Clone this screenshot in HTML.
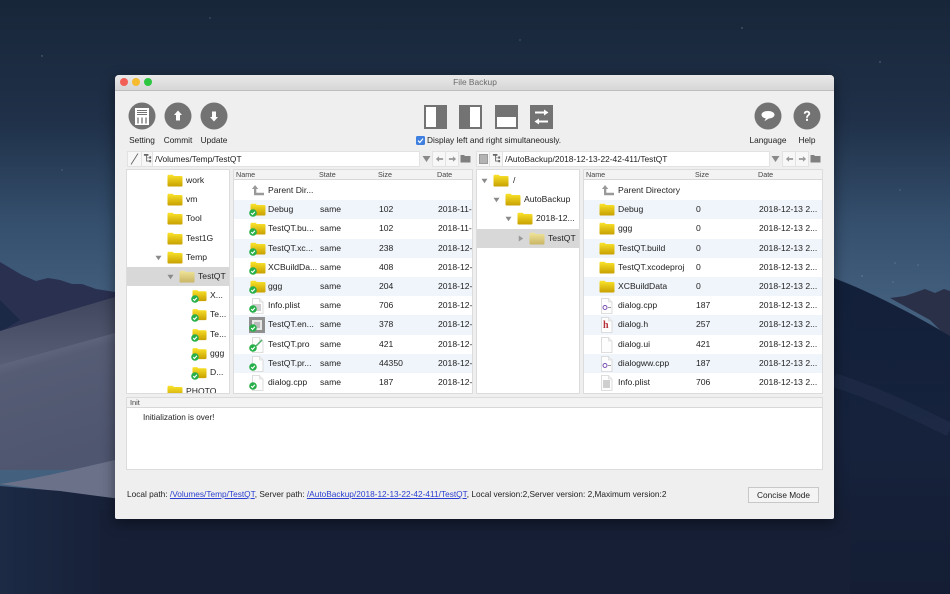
<!DOCTYPE html>
<html><head><meta charset="utf-8"><title>File Backup</title>
<style>
html,body{margin:0;padding:0;width:950px;height:594px;overflow:hidden;background:#16203a}
body{position:relative;font-family:"Liberation Sans",sans-serif;font-size:8.6px;color:#222}
#bg{position:absolute;left:0;top:0}
#win{position:absolute;left:115px;top:75px;width:719px;height:444px;background:#efefef;border-radius:4px 4px 2px 2px;overflow:hidden;box-shadow:0 4px 14px rgba(0,0,0,.45);filter:blur(.35px)}
#layer{position:absolute;left:-115px;top:-75px;width:950px;height:594px}
.a{position:absolute;white-space:nowrap}
.tb{position:absolute;left:115px;top:75px;width:719px;height:15px;background:linear-gradient(#e9e9e9,#d6d6d6);border-bottom:1px solid #bdbdbd}
.dot{position:absolute;width:8px;height:8px;border-radius:50%;top:78px}
.lb{position:absolute;top:135px;line-height:11px;text-align:center;font-size:8.3px}
.p{position:absolute;background:#fff;overflow:hidden;box-shadow:0 0 0 1px #dcdcdc}
.p.tr{padding-top:1px;box-sizing:border-box}
.h{height:10px;line-height:10px;background:#f3f3f3;border-bottom:1px solid #d8d8d8;position:relative;font-size:7.2px;box-sizing:border-box;color:#444;margin-bottom:1px}
.h span{position:absolute;top:0}
.r{height:19.2px;position:relative;line-height:19.2px}
.r.s{background:#f0f5fb}
.r.sel{background:#d8d8d8}
.r span{position:absolute;top:0;white-space:nowrap}
.r svg{position:absolute}
.bar{position:absolute;background:#fff;height:14px;top:152px;line-height:14px;font-size:8.4px;box-shadow:0 0 0 1px #e2e2e2}
.ib{position:absolute;top:152px;height:14px;background:#f7f7f7;box-shadow:0 0 0 1px #e2e2e2}
svg.ab{position:absolute}
a{color:#2a3fd0;text-decoration:underline}
</style></head><body>

<svg id="bg" width="950" height="594" viewBox="0 0 950 594">
<defs>
<linearGradient id="sky" x1="0" y1="0" x2="0" y2="1"><stop offset="0" stop-color="#182639"/><stop offset=".2" stop-color="#1f3048"/><stop offset=".38" stop-color="#35506e"/><stop offset=".52" stop-color="#44607f"/></linearGradient>
<linearGradient id="d1" x1="0" y1="0" x2="0" y2="1"><stop offset="0" stop-color="#3f465d"/><stop offset="1" stop-color="#5d637a"/></linearGradient>
<linearGradient id="d2" x1="0" y1="0" x2=".25" y2="1"><stop offset="0" stop-color="#777d95"/><stop offset=".3" stop-color="#555c74"/><stop offset="1" stop-color="#4f5670"/></linearGradient>
<linearGradient id="d3" x1="0" y1="0" x2="0" y2="1"><stop offset="0" stop-color="#13203a"/><stop offset=".5" stop-color="#16223c"/><stop offset="1" stop-color="#141d33"/></linearGradient>
<linearGradient id="d4" x1="0" y1="0" x2="1" y2="0"><stop offset="0" stop-color="#1c2a45"/><stop offset=".5" stop-color="#19243d"/><stop offset="1" stop-color="#161f36"/></linearGradient>
</defs>
<rect width="950" height="594" fill="url(#sky)"/>
<g fill="#8ea2bb" opacity=".6"><circle cx="42" cy="56" r=".7"/><circle cx="210" cy="18" r=".6"/><circle cx="520" cy="40" r=".6"/><circle cx="742" cy="28" r=".7"/><circle cx="880" cy="62" r=".7"/><circle cx="62" cy="170" r=".6"/><circle cx="900" cy="190" r=".6"/><circle cx="862" cy="276" r=".7"/><circle cx="895" cy="263" r=".6"/><circle cx="918" cy="265" r=".6"/><circle cx="893" cy="282" r=".6"/></g>
<path d="M890 298L905 296L925 289L935 293L944 289L950 291V340L930 320Z" fill="#2a3047"/>
<path d="M0 262L22 275L36 281L48 278L60 280L72 284L82 284L96 289L115 292V300L0 340Z" fill="#2a3050"/>
<path d="M0 300L20 320L0 332Z" fill="#1b2846"/>
<path d="M0 331L115 297V380H0Z" fill="url(#d1)"/>
<path d="M0 365L115 333V470H0Z" fill="url(#d2)"/>
<path d="M0 484C40 478 80 468 115 460V498L60 492Z" fill="#6b7189"/>
<path d="M0 486L60 491L120 499V594H0Z" fill="url(#d4)"/>
<path d="M834 278C880 296 920 318 950 336V594H834Z" fill="url(#d3)"/>
<path d="M834 380C880 395 920 415 950 430" stroke="#23304e" stroke-width="14" fill="none" opacity=".5"/>
<rect x="100" y="510" width="750" height="84" fill="#161f36"/>
</svg>

<svg width="0" height="0" style="position:absolute"><defs>
<linearGradient id="fg" x1="0" y1="0" x2="0" y2="1"><stop offset="0" stop-color="#fbe42c"/><stop offset="1" stop-color="#c8a000"/></linearGradient>
<linearGradient id="fs" x1="0" y1="0" x2="0" y2="1"><stop offset="0" stop-color="#f0e59a"/><stop offset="1" stop-color="#c9b565"/></linearGradient>
<symbol id="f" viewBox="0 0 16 13"><path d="M.5 2Q.5 .7 1.8 .7H5.5L7 2H14.2Q15.5 2 15.5 3.3V11.2Q15.5 12.5 14.2 12.5H1.8Q.5 12.5 .5 11.2Z" fill="url(#fg)"/></symbol>
<symbol id="fl" viewBox="0 0 16 13"><path d="M.5 2Q.5 .7 1.8 .7H5.5L7 2H14.2Q15.5 2 15.5 3.3V11.2Q15.5 12.5 14.2 12.5H1.8Q.5 12.5 .5 11.2Z" fill="url(#fs)"/></symbol>
<symbol id="c" viewBox="0 0 8 8"><circle cx="4" cy="4" r="3.8" fill="#27b04a"/><path d="M2.2 4.1L3.5 5.4L5.9 2.7" stroke="#fff" stroke-width="1.1" fill="none"/></symbol>
<symbol id="d" viewBox="0 0 13 16"><path d="M1.5 .5H8.5L12 4V15.5H1.5Z" fill="#fdfdfd" stroke="#d4d4d4" stroke-width=".8"/><path d="M8.5 .5V4H12" fill="#eee" stroke="#d4d4d4" stroke-width=".6"/></symbol>
<symbol id="up" viewBox="0 0 14 12"><path d="M4 1L1 5H3V11.2H13V8.8H5.3V5H7.3Z" fill="#999"/></symbol>
<symbol id="down" viewBox="0 0 9 8"><path d="M.5 1H8.5L4.5 7Z" fill="#8a8a8a"/></symbol>
<symbol id="right" viewBox="0 0 8 9"><path d="M1 .5V8.5L7 4.5Z" fill="#9a9a9a"/></symbol>
<symbol id="tree" viewBox="0 0 10 12"><path d="M1 1H6V3H4.5V5H7V3.6H9V6.2H7V5.6H4.5V8.3H7V7.6H9V10.2H7V9.3H3.5V3H1Z" fill="#666"/></symbol>
<symbol id="lft" viewBox="0 0 10 8"><path d="M1 4L4.5 1V3H9V5H4.5V7Z" fill="#999"/></symbol>
<symbol id="rgt" viewBox="0 0 10 8"><path d="M9 4L5.5 1V3H1V5H5.5V7Z" fill="#999"/></symbol>
<symbol id="fo" viewBox="0 0 11 9"><path d="M.5 1H4L5 2H10.5V8.5H.5Z" fill="#808080"/></symbol>
</defs></svg>

<div id="win"><div id="layer">
<div class="tb"></div>
<div class="dot" style="left:120px;background:#f25f57"></div>
<div class="dot" style="left:132px;background:#f6bb2e"></div>
<div class="dot" style="left:144px;background:#2cc640"></div>
<div class="a" style="left:415px;width:120px;text-align:center;top:77px;line-height:11px;font-size:8.4px;color:#6a6a6a">File Backup</div>

<svg class="ab" style="left:128px;top:102px" width="28" height="28" viewBox="0 0 28 28"><circle cx="14" cy="14" r="13.5" fill="#737373"/><path d="M7 6H21V23H7Z" fill="#fff"/><path d="M9 8.5H19M9 10.5H19M9 12.5H19" stroke="#737373" stroke-width=".9"/><path d="M10 15.5V21.5M14 15.5V21.5M18 15.5V21.5" stroke="#737373" stroke-width="1.3"/></svg>
<svg class="ab" style="left:164px;top:102px" width="28" height="28" viewBox="0 0 28 28"><circle cx="14" cy="14" r="13.5" fill="#737373"/><path d="M14 8.5L18 13H16V18.5H12V13H10Z" fill="#fff"/></svg>
<svg class="ab" style="left:200px;top:102px" width="28" height="28" viewBox="0 0 28 28"><circle cx="14" cy="14" r="13.5" fill="#737373"/><path d="M14 19.5L18 15H16V9.5H12V15H10Z" fill="#fff"/></svg>
<div class="lb" style="left:122px;width:40px">Setting</div>
<div class="lb" style="left:158px;width:40px">Commit</div>
<div class="lb" style="left:194px;width:40px">Update</div>

<svg class="ab" style="left:424px;top:105px" width="23" height="24" viewBox="0 0 23 24"><rect width="23" height="24" fill="#737373"/><rect x="2" y="2" width="10" height="20" fill="#fff"/></svg>
<svg class="ab" style="left:459px;top:105px" width="23" height="24" viewBox="0 0 23 24"><rect width="23" height="24" fill="#737373"/><rect x="11" y="2" width="10" height="20" fill="#fff"/></svg>
<svg class="ab" style="left:495px;top:105px" width="23" height="24" viewBox="0 0 23 24"><rect width="23" height="24" fill="#737373"/><rect x="2" y="12" width="19" height="10" fill="#fff"/></svg>
<svg class="ab" style="left:530px;top:105px" width="23" height="24" viewBox="0 0 23 24"><rect width="23" height="24" fill="#737373"/><path d="M14 4.5L18.5 7.5L14 10.5V8.5H5V6.5H14ZM9 13.5L4.5 16.5L9 19.5V17.5H18V15.5H9Z" fill="#fff"/></svg>

<svg class="ab" style="left:416px;top:136px" width="9" height="9" viewBox="0 0 9 9"><rect width="9" height="9" rx="1.5" fill="#3f7fe0"/><path d="M2 4.6L3.8 6.5L7 2.6" stroke="#fff" stroke-width="1.2" fill="none"/></svg>
<div class="a" style="left:427px;top:135px;line-height:11px;font-size:8.3px">Display left and right simultaneously.</div>

<svg class="ab" style="left:754px;top:102px" width="28" height="28" viewBox="0 0 28 28"><circle cx="14" cy="14" r="13.5" fill="#737373"/><path d="M14 9C10.2 9 7.5 10.6 7.5 12.8C7.5 14.6 9.2 16 11.8 16.4L10.4 19.3L14.6 16.6C18.2 16.4 20.5 14.8 20.5 12.8C20.5 10.6 17.8 9 14 9Z" fill="#fff"/></svg>
<svg class="ab" style="left:793px;top:102px" width="28" height="28" viewBox="0 0 28 28"><circle cx="14" cy="14" r="13.5" fill="#737373"/><path d="M10.8 11.8C10.8 9.8 12.2 8.8 14 8.8C15.9 8.8 17.2 9.9 17.2 11.5C17.2 13.6 14.9 13.7 14.9 15.7H13.1C13.1 13 15.3 12.9 15.3 11.6C15.3 10.9 14.8 10.5 14 10.5C13.2 10.5 12.7 11 12.7 11.8ZM13 16.8H15V18.9H13Z" fill="#fff"/></svg>
<div class="lb" style="left:743px;width:50px">Language</div>
<div class="lb" style="left:787px;width:40px">Help</div>

<!-- left path bar -->
<div class="ib" style="left:128px;width:13px"></div>
<svg class="ab" style="left:130px;top:153px" width="9" height="12"><path d="M1 11.5L8 .5" stroke="#666" stroke-width=".9"/></svg>
<div class="ib" style="left:142px;width:10px"></div>
<svg class="ab" style="left:143px;top:153px" width="9" height="11"><use href="#tree"/></svg>
<div class="bar" style="left:153px;width:266px;padding-left:2px;box-sizing:border-box">/Volumes/Temp/TestQT</div>
<svg class="ab" style="left:422px;top:155px" width="9" height="8"><use href="#down"/></svg>
<div class="ib" style="left:433px;width:12px"></div><div class="ib" style="left:446px;width:12px"></div>
<svg class="ab" style="left:435px;top:155px" width="9" height="8"><use href="#lft"/></svg>
<svg class="ab" style="left:448px;top:155px" width="9" height="8"><use href="#rgt"/></svg>
<svg class="ab" style="left:460px;top:154px" width="11" height="9"><use href="#fo"/></svg>

<!-- right path bar -->
<div class="ib" style="left:477px;width:12px"></div>
<svg class="ab" style="left:479px;top:154px" width="9" height="10"><rect width="9" height="10" fill="#9a9a9a"/><path d="M1 2H8M1 4H8M1 6H8M1 8H8" stroke="#ddd" stroke-width=".7"/></svg>
<div class="ib" style="left:490px;width:12px"></div>
<svg class="ab" style="left:492px;top:153px" width="9" height="11"><use href="#tree"/></svg>
<div class="bar" style="left:503px;width:266px;padding-left:2px;box-sizing:border-box">/AutoBackup/2018-12-13-22-42-411/TestQT</div>
<svg class="ab" style="left:771px;top:155px" width="9" height="8"><use href="#down"/></svg>
<div class="ib" style="left:783px;width:12px"></div><div class="ib" style="left:796px;width:12px"></div>
<svg class="ab" style="left:785px;top:155px" width="9" height="8"><use href="#lft"/></svg>
<svg class="ab" style="left:798px;top:155px" width="9" height="8"><use href="#rgt"/></svg>
<svg class="ab" style="left:810px;top:154px" width="11" height="9"><use href="#fo"/></svg>

<!-- left tree -->
<div class="p tr" style="left:127px;top:170px;width:102px;height:223px">
<div class="r"><svg style="left:40px;top:3px" width="16" height="13"><use href="#f"/></svg><span style="left:59px">work</span></div>
<div class="r"><svg style="left:40px;top:3px" width="16" height="13"><use href="#f"/></svg><span style="left:59px">vm</span></div>
<div class="r"><svg style="left:40px;top:3px" width="16" height="13"><use href="#f"/></svg><span style="left:59px">Tool</span></div>
<div class="r"><svg style="left:40px;top:3px" width="16" height="13"><use href="#f"/></svg><span style="left:59px">Test1G</span></div>
<div class="r"><svg style="left:28px;top:7px" width="7" height="6"><use href="#down"/></svg><svg style="left:40px;top:3px" width="16" height="13"><use href="#f"/></svg><span style="left:59px">Temp</span></div>
<div class="r sel"><svg style="left:40px;top:7px" width="7" height="6"><use href="#down"/></svg><svg style="left:52px;top:3px" width="16" height="13"><use href="#fl"/></svg><span style="left:71px">TestQT</span></div>
<div class="r"><svg style="left:65px;top:3px" width="15" height="13"><use href="#f"/></svg><svg style="left:64px;top:9px" width="8" height="8"><use href="#c"/></svg><span style="left:83px">X...</span></div>
<div class="r"><svg style="left:65px;top:3px" width="15" height="13"><use href="#f"/></svg><svg style="left:64px;top:9px" width="8" height="8"><use href="#c"/></svg><span style="left:83px">Te...</span></div>
<div class="r"><svg style="left:65px;top:3px" width="15" height="13"><use href="#f"/></svg><svg style="left:64px;top:9px" width="8" height="8"><use href="#c"/></svg><span style="left:83px">Te...</span></div>
<div class="r"><svg style="left:65px;top:3px" width="15" height="13"><use href="#f"/></svg><svg style="left:64px;top:9px" width="8" height="8"><use href="#c"/></svg><span style="left:83px">ggg</span></div>
<div class="r"><svg style="left:65px;top:3px" width="15" height="13"><use href="#f"/></svg><svg style="left:64px;top:9px" width="8" height="8"><use href="#c"/></svg><span style="left:83px">D...</span></div>
<div class="r"><svg style="left:40px;top:3px" width="16" height="13"><use href="#f"/></svg><span style="left:59px">PHOTO</span></div>
</div>

<!-- left table -->
<div class="p" style="left:234px;top:170px;width:238px;height:223px">
<div class="h"><span style="left:2px">Name</span><span style="left:85px">State</span><span style="left:144px">Size</span><span style="left:203px">Date</span></div>
<div class="r"><svg style="left:17px;top:3px" width="14" height="12"><use href="#up"/></svg><span style="left:34px">Parent Dir...</span></div>
<div class="r s"><svg style="left:16px;top:3px" width="16" height="13"><use href="#f"/></svg><svg style="left:15px;top:9px" width="8" height="8"><use href="#c"/></svg><span style="left:34px">Debug</span><span style="left:86px">same</span><span style="left:145px">102</span><span style="left:204px">2018-11-3</span></div>
<div class="r"><svg style="left:16px;top:3px" width="16" height="13"><use href="#f"/></svg><svg style="left:15px;top:9px" width="8" height="8"><use href="#c"/></svg><span style="left:34px">TestQT.bu...</span><span style="left:86px">same</span><span style="left:145px">102</span><span style="left:204px">2018-11-3</span></div>
<div class="r s"><svg style="left:16px;top:3px" width="16" height="13"><use href="#f"/></svg><svg style="left:15px;top:9px" width="8" height="8"><use href="#c"/></svg><span style="left:34px">TestQT.xc...</span><span style="left:86px">same</span><span style="left:145px">238</span><span style="left:204px">2018-12-1</span></div>
<div class="r"><svg style="left:16px;top:3px" width="16" height="13"><use href="#f"/></svg><svg style="left:15px;top:9px" width="8" height="8"><use href="#c"/></svg><span style="left:34px">XCBuildDa...</span><span style="left:86px">same</span><span style="left:145px">408</span><span style="left:204px">2018-12-1</span></div>
<div class="r s"><svg style="left:16px;top:3px" width="16" height="13"><use href="#f"/></svg><svg style="left:15px;top:9px" width="8" height="8"><use href="#c"/></svg><span style="left:34px">ggg</span><span style="left:86px">same</span><span style="left:145px">204</span><span style="left:204px">2018-12-1</span></div>
<div class="r"><svg style="left:17px;top:2px" width="13" height="16"><use href="#d"/></svg><svg style="left:19px;top:8px" width="8" height="7"><rect width="8" height="7" fill="#cfcfcf"/></svg><svg style="left:15px;top:9px" width="8" height="8"><use href="#c"/></svg><span style="left:34px">Info.plist</span><span style="left:86px">same</span><span style="left:145px">706</span><span style="left:204px">2018-12-1</span></div>
<div class="r s"><svg style="left:15px;top:2px" width="16" height="16"><rect width="16" height="16" fill="#8f8f8f"/><rect x="3" y="3" width="10" height="10" fill="#e6e6e6"/><rect x="5" y="5" width="6" height="6" fill="#bbb"/></svg><svg style="left:15px;top:9px" width="8" height="8"><use href="#c"/></svg><span style="left:34px">TestQT.en...</span><span style="left:86px">same</span><span style="left:145px">378</span><span style="left:204px">2018-12-1</span></div>
<div class="r"><svg style="left:17px;top:2px" width="13" height="16"><use href="#d"/></svg><svg style="left:21px;top:4px" width="8" height="8"><path d="M1 7L7 1" stroke="#4cae6b" stroke-width="1.5"/></svg><svg style="left:15px;top:9px" width="8" height="8"><use href="#c"/></svg><span style="left:34px">TestQT.pro</span><span style="left:86px">same</span><span style="left:145px">421</span><span style="left:204px">2018-12-1</span></div>
<div class="r s"><svg style="left:17px;top:2px" width="13" height="16"><use href="#d"/></svg><svg style="left:15px;top:9px" width="8" height="8"><use href="#c"/></svg><span style="left:34px">TestQT.pr...</span><span style="left:86px">same</span><span style="left:145px">44350</span><span style="left:204px">2018-12-1</span></div>
<div class="r"><svg style="left:17px;top:2px" width="13" height="16"><use href="#d"/></svg><svg style="left:15px;top:9px" width="8" height="8"><use href="#c"/></svg><span style="left:34px">dialog.cpp</span><span style="left:86px">same</span><span style="left:145px">187</span><span style="left:204px">2018-12-1</span></div>
</div>

<!-- mid tree -->
<div class="p tr" style="left:477px;top:170px;width:102px;height:223px">
<div class="r"><svg style="left:4px;top:7px" width="7" height="6"><use href="#down"/></svg><svg style="left:16px;top:3px" width="16" height="13"><use href="#f"/></svg><span style="left:36px">/</span></div>
<div class="r"><svg style="left:16px;top:7px" width="7" height="6"><use href="#down"/></svg><svg style="left:28px;top:3px" width="16" height="13"><use href="#f"/></svg><span style="left:47px">AutoBackup</span></div>
<div class="r"><svg style="left:28px;top:7px" width="7" height="6"><use href="#down"/></svg><svg style="left:40px;top:3px" width="16" height="13"><use href="#f"/></svg><span style="left:59px">2018-12...</span></div>
<div class="r sel"><svg style="left:41px;top:6px" width="6" height="7"><use href="#right"/></svg><svg style="left:52px;top:3px" width="16" height="13"><use href="#fl"/></svg><span style="left:71px">TestQT</span></div>
</div>

<!-- right table -->
<div class="p" style="left:584px;top:170px;width:238px;height:223px">
<div class="h"><span style="left:2px">Name</span><span style="left:111px">Size</span><span style="left:174px">Date</span></div>
<div class="r"><svg style="left:17px;top:3px" width="14" height="12"><use href="#up"/></svg><span style="left:34px">Parent Directory</span></div>
<div class="r s"><svg style="left:15px;top:3px" width="16" height="13"><use href="#f"/></svg><span style="left:34px">Debug</span><span style="left:112px">0</span><span style="left:175px">2018-12-13 2...</span></div>
<div class="r"><svg style="left:15px;top:3px" width="16" height="13"><use href="#f"/></svg><span style="left:34px">ggg</span><span style="left:112px">0</span><span style="left:175px">2018-12-13 2...</span></div>
<div class="r s"><svg style="left:15px;top:3px" width="16" height="13"><use href="#f"/></svg><span style="left:34px">TestQT.build</span><span style="left:112px">0</span><span style="left:175px">2018-12-13 2...</span></div>
<div class="r"><svg style="left:15px;top:3px" width="16" height="13"><use href="#f"/></svg><span style="left:34px">TestQT.xcodeproj</span><span style="left:112px">0</span><span style="left:175px">2018-12-13 2...</span></div>
<div class="r s"><svg style="left:15px;top:3px" width="16" height="13"><use href="#f"/></svg><span style="left:34px">XCBuildData</span><span style="left:112px">0</span><span style="left:175px">2018-12-13 2...</span></div>
<div class="r"><svg style="left:16px;top:2px" width="13" height="16"><use href="#d"/></svg><svg style="left:18px;top:8px" width="10" height="7"><circle cx="3" cy="3.5" r="2" stroke="#7a4fb5" fill="none"/><path d="M6 3.5H9" stroke="#999"/></svg><span style="left:34px">dialog.cpp</span><span style="left:112px">187</span><span style="left:175px">2018-12-13 2...</span></div>
<div class="r s"><svg style="left:16px;top:2px" width="13" height="16"><use href="#d"/></svg><span style="left:19px;color:#b5303a;font:bold 10px/21px 'Liberation Serif',serif">h</span><span style="left:34px">dialog.h</span><span style="left:112px">257</span><span style="left:175px">2018-12-13 2...</span></div>
<div class="r"><svg style="left:16px;top:2px" width="13" height="16"><use href="#d"/></svg><span style="left:34px">dialog.ui</span><span style="left:112px">421</span><span style="left:175px">2018-12-13 2...</span></div>
<div class="r s"><svg style="left:16px;top:2px" width="13" height="16"><use href="#d"/></svg><svg style="left:18px;top:8px" width="10" height="7"><circle cx="3" cy="3.5" r="2" stroke="#7a4fb5" fill="none"/><path d="M6 3.5H9" stroke="#999"/></svg><span style="left:34px">dialogww.cpp</span><span style="left:112px">187</span><span style="left:175px">2018-12-13 2...</span></div>
<div class="r"><svg style="left:16px;top:2px" width="13" height="16"><use href="#d"/></svg><svg style="left:19px;top:7px" width="7" height="8"><rect width="7" height="8" fill="#cfcfcf"/></svg><span style="left:34px">Info.plist</span><span style="left:112px">706</span><span style="left:175px">2018-12-13 2...</span></div>
</div>

<!-- log -->
<div class="p" style="left:127px;top:398px;width:695px;height:71px">
<div class="h" style="height:10px;font-size:7.4px"><span style="left:3px">Init</span></div>
<div class="a" style="left:16px;top:14px;line-height:11px;font-size:8.2px">Initialization is over!</div>
</div>

<div class="a" style="left:127px;top:489px;line-height:11px;font-size:8.3px">Local path: <a>/Volumes/Temp/TestQT</a>, Server path: <a>/AutoBackup/2018-12-13-22-42-411/TestQT</a>, Local version:2,Server version: 2,Maximum version:2</div>
<div class="a" style="left:748px;top:487px;width:71px;height:16px;box-sizing:border-box;border:1px solid #c8c8c8;background:#f4f4f4;text-align:center;line-height:14px;font-size:8.3px">Concise Mode</div>
</div></div>
</body></html>
